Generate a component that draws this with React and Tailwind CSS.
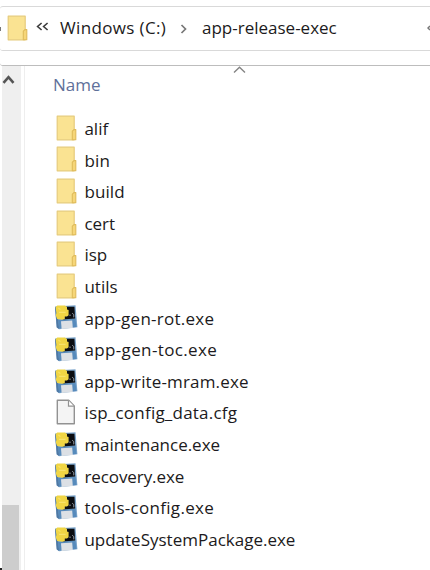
import React from "react";

function FolderIcon({ className }) {
  return (
    <svg className={className} viewBox="0 0 21 26" fill="none">
      <path d="M1.2 1.2H18.2V24.8H1.2Z" fill="#fae392" stroke="#e6cb7c" strokeWidth="1.2" strokeLinejoin="round" />
      <path d="M16.3 24.8V16.2L18 14.6H19.8V24.8Z" fill="#f6d678" stroke="#dfbb5b" strokeWidth="1.1" strokeLinejoin="round" />
    </svg>
  );
}

function ExeIcon() {
  return (
    <svg className="h-[26px] w-6" viewBox="0 0 24 26">
      <path d="M1 2.5L21.5 1.2L23.4 23.2L5 25.2L2.6 23.2Z" fill="#7ba4cb" />
      <path d="M1 3.2L3 3L5.2 25L2.8 23.4Z" fill="#4f78a3" />
      <path d="M4 16L21.5 15L22.5 23L5 24.5Z" fill="#568abb" />
      <path d="M7 17.2L18.2 16.4L18.8 24L7.6 25Z" fill="#dce0e5" />
      <path d="M9 2.8H20.4L21.2 14.4L8.5 15.6Z" fill="#0b0d11" />
      <path d="M1.6 3.2L3.2 1.6H11L13 3V5.4L14.6 6V11.2L13 12.6H10.8V15L8.4 15.8L3.2 15L1.8 11.5L2.4 9Z" fill="#f0d544" />
      <path d="M4.4 4L6.4 5.6M5 8.4H11.6" stroke="#f7e26b" strokeWidth="1.2" />
      <path d="M16 12V10.5M18.2 9.2L19.8 10.6V13.4" stroke="#969da5" strokeWidth="1" fill="none" />
    </svg>
  );
}

function FileIcon() {
  return (
    <svg className="ml-[2px] h-[26px] w-5" viewBox="0 0 20 26">
      <path d="M1.3 1.2H12.7L18.3 7V24.8H1.3Z" fill="#f4f4f4" stroke="#929292" strokeWidth="1.4" strokeLinejoin="round" />
      <path d="M12.5 1.5V7.2H18" fill="#fff" stroke="#929292" strokeWidth="1.2" />
    </svg>
  );
}

const entries = [
  ["folder", "alif", "tracking-normal"],
  ["folder", "bin", "tracking-[0.2px]"],
  ["folder", "build", "tracking-[0.1px]"],
  ["folder", "cert", "tracking-normal"],
  ["folder", "isp", "tracking-normal"],
  ["folder", "utils", "tracking-normal"],
  ["exe", "app-gen-rot.exe", "tracking-[0.25px]"],
  ["exe", "app-gen-toc.exe", "tracking-[0.37px]"],
  ["exe", "app-write-mram.exe", "tracking-[0.15px]"],
  ["file", "isp_config_data.cfg", "tracking-[0.22px]"],
  ["exe", "maintenance.exe", "tracking-[-0.02px]"],
  ["exe", "recovery.exe", "tracking-[-0.08px]"],
  ["exe", "tools-config.exe", "tracking-[0.3px]"],
  ["exe", "updateSystemPackage.exe", "tracking-normal"],
];

function Entry({ kind, name, spacing }) {
  return (
    <li className="flex h-[31.6px] items-center">
      <span className="flex w-[30.4px] shrink-0">
        {kind === "folder" && <FolderIcon className="ml-[2px] h-[26px] w-[21px]" />}
        {kind === "exe" && <ExeIcon />}
        {kind === "file" && <FileIcon />}
      </span>
      <span className={"whitespace-nowrap pt-[2.5px] leading-6 " + spacing}>{name}</span>
    </li>
  );
}

export default function App() {
  return (
    <div className="flex h-[570px] w-[430px] flex-col overflow-hidden bg-white font-['Open_Sans','Noto_Sans',sans-serif] text-[17px] text-[#1c1a20]">
      <header className="h-[66px] shrink-0 rounded-bl-[3px] border-b border-[#bdbdbd] pt-[6px]">
        <div className="flex h-[45px] items-center rounded-l-[3px] border-y border-[#d9d9d9]">
          <span className="h-1 w-[1px] bg-[#777]" />
          <FolderIcon className="-mt-[2px] ml-[6px] h-[26px] w-[21px] shrink-0" />
          <svg className="-mt-[4px] ml-[8px] h-[10px] w-[13px] shrink-0" viewBox="0 0 13 10" fill="none" stroke="#3c3c3c" strokeWidth="1.6">
            <path d="M5.6 1L1.6 4.5L5.6 8M11.6 1L7.6 4.5L11.6 8" />
          </svg>
          <span className="-mt-[2px] ml-[11px] w-[108px] shrink-0 whitespace-nowrap tracking-[0.35px]">Windows (C:)</span>
          <svg className="ml-[12px] h-[10px] w-[8px] shrink-0" viewBox="0 0 8 10" fill="none" stroke="#777" strokeWidth="1.7">
            <path d="M1.5 1L5.5 5L1.5 9" />
          </svg>
          <span className="-mt-[2px] ml-[14px] whitespace-nowrap">app-release-exec</span>
          <svg className="-mt-[2px] ml-auto h-[6px] w-[3px]" viewBox="0 0 3 6" fill="none" stroke="#777" strokeWidth="1.5">
            <path d="M3 1L1 3L3 5" />
          </svg>
        </div>
      </header>
      <main className="flex min-h-0 flex-1">
        <div className="flex w-[2px] shrink-0 items-end">
          <span className="h-[2px] w-full bg-[#222]" />
        </div>
        <aside className="flex w-[19px] shrink-0 flex-col justify-between bg-[#efefef]">
          <svg className="mt-[8px] h-[11px] w-[13px]" viewBox="0 0 13 11" fill="none" stroke="#555" strokeWidth="2.6">
            <path d="M1.5 8.8L6.5 3.2L11.5 8.8" />
          </svg>
          <div className="h-[65px] w-[17px] bg-[#cdcdcd]" />
        </aside>
        <section className="ml-[3px] flex-1 border-l border-[#eeeeee] pl-[29px]">
          <div className="-ml-px flex h-[46px] items-start">
            <span className="w-[180px] pt-[7px] leading-6 text-[#60709a]">Name</span>
            <svg className="h-[8px] w-[13px]" viewBox="0 0 13 8" fill="none" stroke="#858585" strokeWidth="1.4">
              <path d="M1 6.5L6.5 1.2L12 6.5" />
            </svg>
          </div>
          <ul>
            {entries.map(([kind, name, spacing]) => (
              <Entry key={name} kind={kind} name={name} spacing={spacing} />
            ))}
          </ul>
        </section>
      </main>
    </div>
  );
}
